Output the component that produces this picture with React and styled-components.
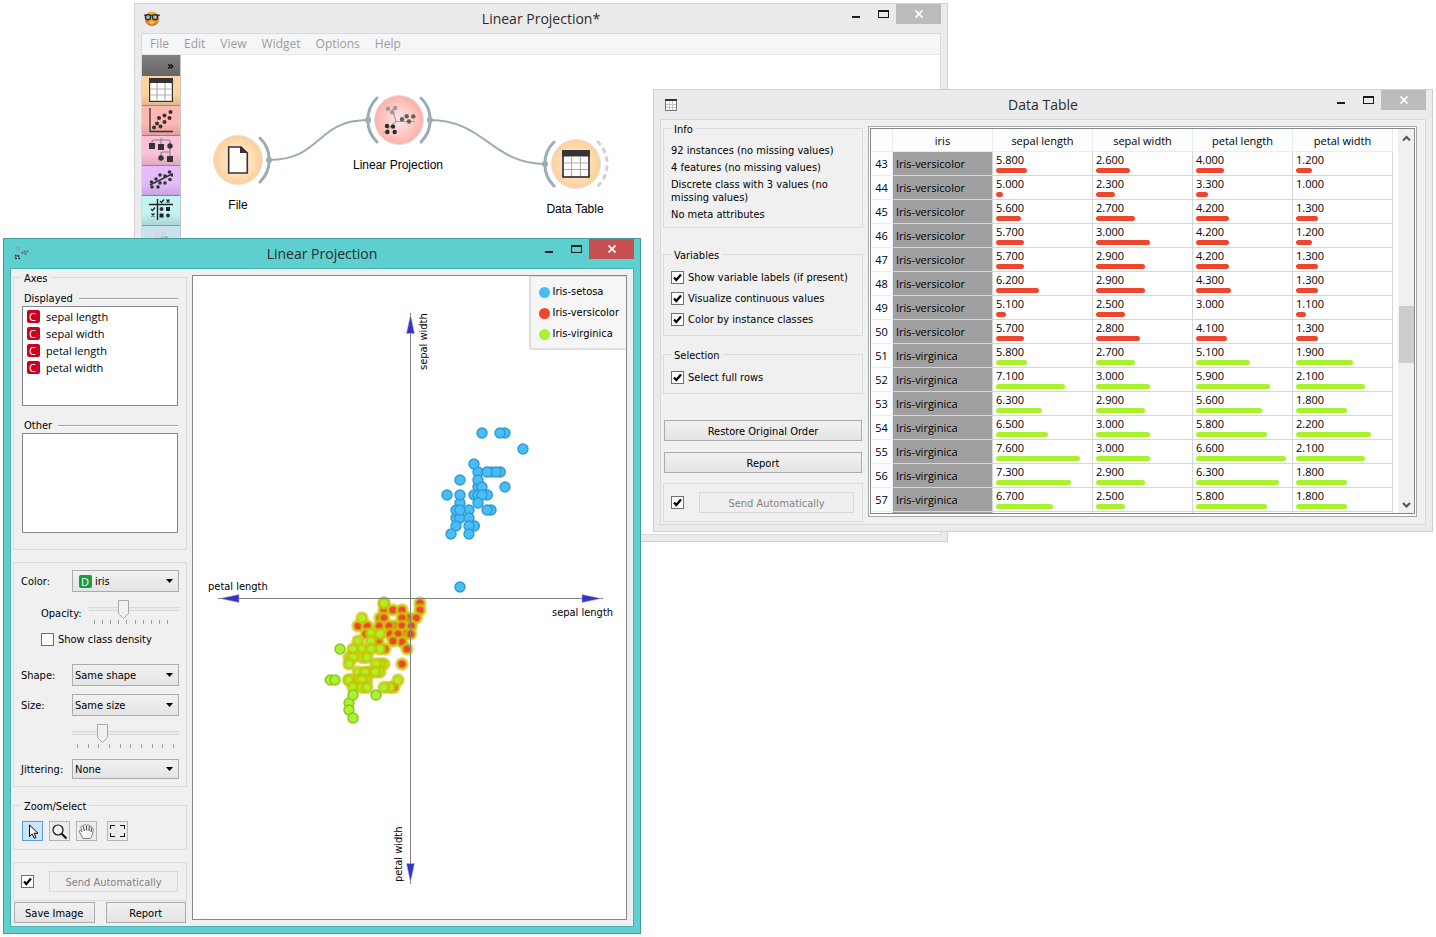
import React from "react";
import styled, { createGlobalStyle, css } from "styled-components";

const UI_FONT = '"DejaVu Sans Condensed", "DejaVu Sans", Tahoma, sans-serif';
const TEXT_FONT = '"Open Sans", "Segoe UI", sans-serif';
const NODE_FONT = '"Liberation Sans", Arial, sans-serif';

const RED = "rgb(237,70,47)";
const GREEN = "rgb(170,242,43)";
const BLUE = "rgb(70,190,250)";

const svgUrl = (body, w, h) =>
  `url("data:image/svg+xml,${encodeURIComponent(
    `<svg xmlns='http://www.w3.org/2000/svg' width='${w}' height='${h}' viewBox='0 0 ${w} ${h}'>${body}</svg>`
  )}")`;

const CHECK = svgUrl("<path d='M2 5.5L4.3 8L9 2.5' fill='none' stroke='#000' stroke-width='2.2'/>", 11, 11);
const ARROW = svgUrl("<path d='M0 0H7L3.5 4Z' fill='#000'/>", 7, 4);
const THUMB = svgUrl(
  "<path d='M.5 .5H10.5V13.5L5.5 18.5L.5 13.5Z' fill='#f0f0f0' stroke='#a8a8a8'/>",
  11,
  19
);

const GlobalStyle = createGlobalStyle`
  *, *::before, *::after { box-sizing: border-box; }
  body { margin: 0; background: #fff; color: #000; font: 11px/14px ${UI_FONT}; }
  button, select, input { font: inherit; color: inherit; margin: 0; }
`;

/* ---------- desktop and window frames ---------- */

const Desktop = styled.main`
  position: relative;
  min-height: 100vh;
  min-width: 1300px;
  overflow: hidden;
`;

const Frame = styled.section`
  position: absolute;
  top: ${(p) => p.$top}px;
  left: ${(p) => p.$left}px;
  right: ${(p) => p.$right}px;
  padding: 0 6px 6px;
  background: ${(p) => (p.$active ? "#5dcfcf" : "#ebebeb")};
  border: 1px solid ${(p) => (p.$active ? "#459b9b" : "#d0d0d0")};
`;

const TitleBar = styled.header`
  display: grid;
  grid-template-columns: 1fr auto 1fr;
  align-items: start;
  height: 29px;
`;

const TitleIcon = styled.span`
  display: flex;
  align-items: center;
  height: 29px;
  padding-left: ${(p) => p.$pad}px;
`;

const Title = styled.h1`
  margin: 0;
  font: 400 14px/30px ${TEXT_FONT};
  color: #2b2b2b;
`;

const Controls = styled.div`
  display: flex;
  justify-self: end;
`;

const ControlButton = styled.button`
  display: flex;
  align-items: center;
  justify-content: center;
  width: ${(p) => (p.$close ? 45 : 27)}px;
  height: 20px;
  padding: ${(p) => (p.$close ? "0" : "0 0 0 2px")};
  border: 0;
  background: ${(p) => (p.$close ? (p.$active ? "#c75050" : "#bcbcbc") : "transparent")};
`;

const Client = styled.div`
  border: 1px solid ${(p) => (p.$active ? "#4ab0b0" : "#dadada")};
  background: #f0f0f0;
`;

function Window({ title, icon, iconPad = 3, active, top, left, right, children }) {
  return (
    <Frame $active={active} $top={top} $left={left} $right={right} aria-label={title}>
      <TitleBar>
        <TitleIcon $pad={iconPad}>{icon}</TitleIcon>
        <Title>{title}</Title>
        <Controls>
          <ControlButton aria-label="Minimize">
            <svg width="11" height="10" viewBox="0 0 11 10" shapeRendering="crispEdges">
              <path d="M1 7H9V9H1Z" fill="#1c1c1c" />
            </svg>
          </ControlButton>
          <ControlButton aria-label="Maximize">
            <svg width="11" height="8" viewBox="0 0 11 8" shapeRendering="crispEdges">
              <path d="M0 0H11V8H0ZM1 2V7H10V2Z" fill="#1c1c1c" fillRule="evenodd" />
            </svg>
          </ControlButton>
          <ControlButton $close $active={active} aria-label="Close">
            <svg width="8" height="8" viewBox="0 0 8 8">
              <path d="M.5 .5L7.5 7.5M7.5 .5L.5 7.5" stroke="#fff" strokeWidth="1.7" />
            </svg>
          </ControlButton>
        </Controls>
      </TitleBar>
      <Client $active={active}>{children}</Client>
    </Frame>
  );
}

/* ---------- shared form parts ---------- */

const GroupBox = styled.fieldset`
  margin: ${(p) => p.$gap || 0}px 0 0;
  padding: 0;
  min-width: 0;
  border: 1px solid #dcdcdc;
`;

const GroupTitle = styled.legend`
  margin-left: 7px;
  padding: 0 3px;
  height: 14px;
  line-height: 17px;
`;

const PushButton = styled.button`
  flex: 1;
  height: 21px;
  padding: 2px 0 0;
  border: 1px solid #acacac;
  background: linear-gradient(#f1f1f1, #e4e4e4);
  &:disabled {
    color: #838383;
    border-color: #d9d9d9;
    background: #efefef;
  }
`;

const CheckInput = styled.input.attrs({ type: "checkbox" })`
  appearance: none;
  flex: none;
  width: 13px;
  height: 13px;
  border: 1px solid #707070;
  background: #fff;
  &:checked {
    background: #fff ${CHECK} center no-repeat;
  }
`;

const CheckLabel = styled.label`
  display: flex;
  align-items: center;
  gap: 4px;
  height: 17px;
`;

const CheckText = styled.span`
  padding-top: 1px;
`;

function Check({ children, ...rest }) {
  return (
    <CheckLabel>
      <CheckInput {...rest} />
      <CheckText>{children}</CheckText>
    </CheckLabel>
  );
}

const AutoRow = styled.div`
  display: flex;
  align-items: center;
  gap: 15px;
  padding: 8px 8px 8px 7px;
`;

function AutoCommit({ gap }) {
  return (
    <GroupBox $gap={gap}>
      <AutoRow>
        <CheckInput defaultChecked aria-label="Send automatically" />
        <PushButton disabled>Send Automatically</PushButton>
      </AutoRow>
    </GroupBox>
  );
}

/* ---------- icons ---------- */

const OrangeLogo = () => (
  <svg width="16" height="16" viewBox="0 0 16 16">
    <defs>
      <radialGradient id="face" cx="50%" cy="35%" r="65%">
        <stop offset="0" stopColor="#ffd34a" />
        <stop offset="0.6" stopColor="#f59a20" />
        <stop offset="1" stopColor="#d9621a" />
      </radialGradient>
    </defs>
    <circle cx="8" cy="7.8" r="7.2" fill="url(#face)" />
    <path d="M0 4.2H16" stroke="#333" strokeWidth="1.3" />
    <circle cx="4" cy="6.2" r="2.6" fill="#a9b8bd" stroke="#2a2a2a" strokeWidth="1.4" />
    <circle cx="11" cy="6.2" r="2.6" fill="#a9b8bd" stroke="#2a2a2a" strokeWidth="1.4" />
    <path d="M4.5 11.2Q8 14 11.5 10.8Q8 11.800 4.5 11.2Z" fill="#fff3c0" />
  </svg>
);

const TableGlyph = ({ size }) => (
  <svg width={size} height={size} viewBox="0 0 24 24">
    <rect x="0.6" y="0.6" width="22.8" height="22.8" fill="#fff" stroke="#333" strokeWidth="1.2" />
    <path d="M0 0H24V5H0Z" fill="#333" />
    <path d="M1 11H23M1 17H23M8 5V23M16 5V23" stroke="#b0b0b0" strokeWidth="1.2" />
  </svg>
);

const SmallTable = () => (
  <svg width="12" height="12" viewBox="0 0 12 12" shapeRendering="crispEdges">
    <path d="M0 0H12V12H0Z" fill="#777" />
    <path d="M0 0H12V2H0Z" fill="#333" />
    <path d="M1 2H11V11H1Z" fill="#fff" />
    <path d="M1 5.5H11M1 8.5H11M4.5 2V11M7.5 2V11" stroke="#c4c4c4" />
  </svg>
);

const ProjectionGlyph = ({ x = 0, y = 0, size = 34 }) => (
  <svg x={x} y={y} width={size} height={size} viewBox="0 0 34 34">
    <path d="M13 17.200L9.500 5M13 17.500H32M13 17.200L0.500 29.500" stroke="#a3a3a3" strokeWidth="1.2" fill="none" />
    <g fill="#999">
      <circle cx="5" cy="4.700" r="2.2" />
      <circle cx="12.200" cy="4" r="2.2" />
      <circle cx="9.200" cy="8.300" r="2.2" />
    </g>
    <g fill="#606060">
      <circle cx="19" cy="15.300" r="2.2" />
      <circle cx="23.700" cy="12.200" r="2.2" />
      <circle cx="30.300" cy="12.400" r="2.2" />
      <circle cx="26" cy="17.500" r="2.2" />
    </g>
    <g fill="#2a2a2a">
      <circle cx="4" cy="22" r="2.2" />
      <circle cx="10" cy="22.600" r="2.2" />
      <circle cx="4.400" cy="28" r="2.2" />
      <circle cx="11.700" cy="28" r="2.2" />
    </g>
  </svg>
);

const dots = (list, r) => list.map(([x, y], i) => <circle key={i} cx={x} cy={y} r={r} fill="#333" />);

const ScatterGlyph = () => (
  <svg width="24" height="26" viewBox="0 0 24 26">
    <path d="M1 1V24.5H24" fill="none" stroke="#333" strokeWidth="1.3" />
    {dots([[5, 20.5], [11.500, 19.5], [8, 16.5], [15.500, 15], [10, 11], [15.5, 8.5], [20.5, 11], [21.500, 5]], 2)}
  </svg>
);

const TreeGlyph = () => (
  <svg width="26" height="26" viewBox="0 0 26 26">
    <path d="M13 1V8M4 7V4Q4 3 6 3H20Q22 3 22 4V24M13 21V16Q13 15 15 15H22" fill="none" stroke="#888" strokeWidth="1.2" />
    <path d="M1 6H7V12H1ZM10 7H16V13H10ZM19 19H25V25H19Z" fill="#333" />
    {dots([[22, 9], [13, 21]], 2.7)}
  </svg>
);

const RegressionGlyph = () => (
  <svg width="24" height="22" viewBox="0 0 24 22">
    <path d="M1 16L23 5" stroke="#333" strokeWidth="1.4" />
    {dots([[3, 18], [9, 18], [2.5, 13], [7, 10], [11, 14], [16, 14], [21, 10.5], [11, 6], [16, 7], [20.5, 3], [23, 6]], 1.8)}
  </svg>
);

const EvaluateGlyph = () => (
  <svg width="24" height="24" viewBox="0 0 24 24">
    <path d="M8.5 1V22M0 6.5H24" stroke="#222" strokeWidth="1.4" />
    <path
      d="M11 3L12.5 4.5L15 1.5M2 11L3.5 12.5L6 9.5M17.5 1.500L20.5 4.5M20.5 1.5L17.5 4.5M2.5 15.5L5.5 18.5M5.5 15.5L2.5 18.5"
      fill="none"
      stroke="#222"
      strokeWidth="1.3"
    />
    <path d="M17 9H21V13H17ZM10.5 15.5H14.5V19.5H10.5Z" fill="#222" />
    {dots([[12.5, 11], [19, 17.5]], 2)}
  </svg>
);

const FadedGlyph = () => (
  <svg width="22" height="22" viewBox="0 0 22 22">
    <g fill="#d6d6d6">
      <circle cx="7" cy="6" r="3" />
      <circle cx="13" cy="5" r="2.5" />
      <circle cx="5" cy="11" r="2.5" />
    </g>
    <g fill="#a9b0b3">
      <circle cx="16" cy="9" r="2" />
      <circle cx="12" cy="10" r="2" />
    </g>
  </svg>
);

/* ---------- canvas window ---------- */

const MenuBar = styled.nav`
  display: flex;
  gap: 15px;
  height: 21px;
  padding: 0 8px;
  background: #f5f6f7;
  border-bottom: 1px solid #e8e8e8;
`;

const MenuItem = styled.a`
  font: 12px/20px ${TEXT_FONT};
  color: #9c9c9c;
  text-decoration: none;
`;

const Workbench = styled.div`
  display: flex;
  background: #fff;
`;

const ToolDock = styled.div`
  flex: none;
  width: 39px;
  border-right: 1px solid #c8c8c8;
`;

const DockHeader = styled.button`
  display: block;
  width: 100%;
  height: 21px;
  padding: 0 6px 0 0;
  border: 0;
  text-align: right;
  font: 700 12px/20px ${UI_FONT};
  background: linear-gradient(#808080, #666);
`;

const DockButton = styled.button`
  display: flex;
  align-items: center;
  justify-content: center;
  width: 100%;
  height: 30px;
  padding: 0 0 1px;
  border: 0;
  border-bottom: 1px solid rgba(0, 0, 0, 0.35);
  background: linear-gradient(transparent 60%, rgba(0, 0, 0, 0.12)) ${(p) => p.$color};
`;

const Scheme = styled.svg`
  flex: 1;
  min-width: 0;
  height: 479px;
  display: block;
  text {
    font: 12px ${NODE_FONT};
    text-anchor: middle;
  }
`;

const MENU = ["File", "Edit", "View", "Widget", "Options", "Help"];

const CATEGORIES = [
  ["Data", "#ffd39f", <TableGlyph size={24} />],
  ["Visualize", "#ffb7b1", <ScatterGlyph />],
  ["Classify", "#fac1d9", <TreeGlyph />],
  ["Regression", "#e5bbfb", <RegressionGlyph />],
  ["Evaluate", "#c3f3f3", <EvaluateGlyph />],
  ["Unsupervised", "#cae1ef", <FadedGlyph />],
];

const rightArc = (cx, cy) => `M${cx + 22} ${cy - 22}A31 31 0 0 1 ${cx + 22} ${cy + 22}`;
const leftArc = (cx, cy) => `M${cx - 22} ${cy - 22}A31 31 0 0 0 ${cx - 22} ${cy + 22}`;

function CanvasWindow() {
  return (
    <Window title="Linear Projection*" icon={<OrangeLogo />} top={3} left={134} right={488}>
      <MenuBar>
        {MENU.map((m) => (
          <MenuItem key={m} href="#">
            {m}
          </MenuItem>
        ))}
      </MenuBar>
      <Workbench>
        <ToolDock>
          <DockHeader>»</DockHeader>
          {CATEGORIES.map(([name, color, glyph]) => (
            <DockButton key={name} $color={color} aria-label={name}>
              {glyph}
            </DockButton>
          ))}
        </ToolDock>
        <Scheme viewBox="181 55 759 479" preserveAspectRatio="xMinYMin meet">
          <defs>
            <radialGradient id="orangeNode">
              <stop offset="0" stopColor="#fff4e6" />
              <stop offset="1" stopColor="#ffcf98" />
            </radialGradient>
            <radialGradient id="redNode">
              <stop offset="0" stopColor="#ffe9e7" />
              <stop offset="1" stopColor="#ffb0aa" />
            </radialGradient>
          </defs>
          <g fill="none" stroke="#9cacb4" strokeWidth="2">
            <path d="M269 160C322 160 316 120 368 120" />
            <path d="M430 120C484 120 492 164 545 164" />
          </g>
          <g fill="none" stroke="#9cacb4" strokeWidth="3" strokeLinecap="round">
            <path d={rightArc(238, 160)} />
            <path d={leftArc(399, 120)} />
            <path d={rightArc(399, 120)} />
            <path d={leftArc(576, 164)} />
            <path d={rightArc(576, 164)} stroke="#cbd3d8" strokeDasharray="3 6" />
          </g>
          <g fill="#9cacb4">
            <circle cx="269" cy="160" r="3" />
            <circle cx="368" cy="120" r="3" />
            <circle cx="430" cy="120" r="3" />
            <circle cx="545" cy="164" r="3" />
          </g>
          <g stroke="#dfe3e6" strokeWidth="1">
            <circle cx="238" cy="160" r="24.5" fill="url(#orangeNode)" />
            <circle cx="399" cy="120" r="24.5" fill="url(#redNode)" />
            <circle cx="576" cy="164" r="24.5" fill="url(#orangeNode)" />
          </g>
          <path d="M228.700 147H241L247.300 153V173H228.700Z" fill="#fff" stroke="#333" strokeWidth="1.6" />
          <path d="M240 146.500V153H247.800Z" fill="#333" />
          <ProjectionGlyph x={383} y={104} />
          <svg x="562" y="150" width="28" height="28" viewBox="0 0 28 28">
            <rect x="1" y="1" width="26" height="26" fill="#fff" stroke="#333" strokeWidth="1.7" />
            <path d="M0.200 0.200H27.800V6.500H0.200Z" fill="#333" />
            <path d="M2 13H26M2 19.500H26M9.500 6V26M18.500 6V26" stroke="#b4aba4" strokeWidth="1.2" />
          </svg>
          <text x="238" y="209">File</text>
          <text x="398" y="169">Linear Projection</text>
          <text x="575" y="213">Data Table</text>
        </Scheme>
      </Workbench>
    </Window>
  );
}

/* ---------- data table window ---------- */

const DataLayout = styled.div`
  display: flex;
  gap: 5px;
  align-items: flex-start;
  padding: 1px 8px 2px 2px;
`;

const DataSide = styled.div`
  flex: none;
  width: 200px;
`;

const InfoBody = styled.div`
  display: flex;
  flex-direction: column;
  gap: 4px;
  padding: 9px 7px 6px;
  p {
    margin: 0;
    line-height: 13px;
  }
`;

const CheckBody = styled.div`
  display: flex;
  flex-direction: column;
  gap: 4px;
  padding: 8px 7px 7px;
`;

const ButtonStack = styled.div`
  display: grid;
  gap: 11px;
  margin-top: 26px;
  padding: 0 1px;
`;

const TableFrame = styled.div`
  flex: 1;
  min-width: 0;
  margin-top: 5px;
  padding: 1px 1px 2px;
  border: 1px solid #a9a9a9;
  background: #fff;
`;

const TableView = styled.div`
  display: flex;
  justify-content: space-between;
  border: 1px solid #828790;
`;

const Grid = styled.table`
  flex: none;
  width: 522px;
  table-layout: fixed;
  border-collapse: separate;
  border-spacing: 0;
  font: 11px/16px ${TEXT_FONT};
`;

const headerCell = css`
  font-weight: 400;
  background: #fdfdfd;
  border-right: 1px solid #e4eefb;
  border-bottom: 1px solid #e4eefb;
`;

const HeadCell = styled.th`
  ${headerCell}
  width: ${(p) => p.$w}px;
  height: 23px;
  padding: 2px 0 0;
`;

const RowHead = styled.th`
  ${headerCell}
  height: 24px;
  padding: 0;
`;

const bodyCell = css`
  height: 24px;
  padding: 0 3px;
  border-right: 1px solid #d6d6d6;
  border-bottom: 1px solid #d6d6d6;
`;

const ClassCell = styled.td`
  ${bodyCell}
  background: #a0a0a0;
`;

const ValueCell = styled.td`
  ${bodyCell}
  vertical-align: top;
`;

const Bar = styled.div`
  height: 5px;
  border-radius: 3px;
  background: ${(p) => p.$color};
`;

const CutCell = styled.td`
  height: 1px;
  padding: 0;
  background: ${(p) => (p.$grey ? "#a0a0a0" : "#fff")};
  border-right: 1px solid #d6d6d6;
`;

const ScrollBar = styled.div`
  display: flex;
  flex-direction: column;
  align-items: center;
  width: 16px;
  padding: 6px 0 4px;
  background: #f0f0f0;
`;

const ScrollThumb = styled.div`
  width: 15px;
  height: 57px;
  margin: 164px 0 auto;
  background: #cdcdcd;
`;

const COLUMNS = [
  { name: "sepal length", min: 4.9, scale: 29.4 },
  { name: "sepal width", min: 2, scale: 49 },
  { name: "petal length", min: 3, scale: 23.8 },
  { name: "petal width", min: 1, scale: 58.7 },
];

const ROWS = [
  [43, 5.8, 2.6, 4.0, 1.2],
  [44, 5.0, 2.3, 3.3, 1.0],
  [45, 5.6, 2.7, 4.2, 1.3],
  [46, 5.7, 3.0, 4.2, 1.2],
  [47, 5.7, 2.9, 4.2, 1.3],
  [48, 6.2, 2.9, 4.3, 1.3],
  [49, 5.1, 2.5, 3.0, 1.1],
  [50, 5.7, 2.8, 4.1, 1.3],
  [51, 5.8, 2.7, 5.1, 1.9],
  [52, 7.1, 3.0, 5.9, 2.1],
  [53, 6.3, 2.9, 5.6, 1.8],
  [54, 6.5, 3.0, 5.8, 2.2],
  [55, 7.6, 3.0, 6.6, 2.1],
  [56, 7.3, 2.9, 6.3, 1.8],
  [57, 6.7, 2.5, 5.8, 1.8],
];

const barWidth = (v, { min, scale }) => (v > min ? Math.floor(5 + (v - min) * scale) : 0);

const Chevron = ({ down }) => (
  <svg width="9" height="7" viewBox="0 0 9 7">
    <path d={down ? "M1 1L4.5 4.5L8 1" : "M1 5.5L4.5 2L8 5.5"} fill="none" stroke="#555" strokeWidth="2" />
  </svg>
);

function DataTableWindow() {
  return (
    <Window title="Data Table" icon={<SmallTable />} iconPad={5} top={89} left={653} right={3}>
      <DataLayout>
        <DataSide>
          <GroupBox>
            <GroupTitle>Info</GroupTitle>
            <InfoBody>
              <p>92 instances (no missing values)</p>
              <p>4 features (no missing values)</p>
              <p>Discrete class with 3 values (no missing values)</p>
              <p>No meta attributes</p>
            </InfoBody>
          </GroupBox>
          <GroupBox $gap={19}>
            <GroupTitle>Variables</GroupTitle>
            <CheckBody>
              <Check defaultChecked>Show variable labels (if present)</Check>
              <Check defaultChecked>Visualize continuous values</Check>
              <Check defaultChecked>Color by instance classes</Check>
            </CheckBody>
          </GroupBox>
          <GroupBox $gap={11}>
            <GroupTitle>Selection</GroupTitle>
            <CheckBody>
              <Check defaultChecked>Select full rows</Check>
            </CheckBody>
          </GroupBox>
          <ButtonStack>
            <PushButton>Restore Original Order</PushButton>
            <PushButton>Report</PushButton>
          </ButtonStack>
          <AutoCommit gap={10} />
        </DataSide>
        <TableFrame>
          <TableView>
            <Grid>
              <thead>
                <tr>
                  <HeadCell $w={22} aria-label="Row" />
                  <HeadCell $w={100}>iris</HeadCell>
                  {COLUMNS.map((c) => (
                    <HeadCell key={c.name} $w={100}>
                      {c.name}
                    </HeadCell>
                  ))}
                </tr>
              </thead>
              <tbody>
                {ROWS.map(([n, ...values]) => (
                  <tr key={n}>
                    <RowHead scope="row">{n}</RowHead>
                    <ClassCell>{n <= 50 ? "Iris-versicolor" : "Iris-virginica"}</ClassCell>
                    {values.map((v, i) => (
                      <ValueCell key={i}>
                        {v.toFixed(3)}
                        <Bar $color={n <= 50 ? RED : GREEN} style={{ width: barWidth(v, COLUMNS[i]) }} />
                      </ValueCell>
                    ))}
                  </tr>
                ))}
                <tr aria-hidden="true">
                  <CutCell />
                  <CutCell $grey />
                  <CutCell />
                  <CutCell />
                  <CutCell />
                  <CutCell />
                </tr>
              </tbody>
            </Grid>
            <ScrollBar>
              <Chevron />
              <ScrollThumb />
              <Chevron down />
            </ScrollBar>
          </TableView>
        </TableFrame>
      </DataLayout>
    </Window>
  );
}

/* ---------- projection window ---------- */

const ProjectionLayout = styled.div`
  display: flex;
  gap: 5px;
  padding: 0 6px 0 2px;
`;

const ProjectionSide = styled.div`
  flex: none;
  width: 174px;
  padding: 1px 0 3px;
`;

const AxesBody = styled.div`
  display: grid;
  gap: 13px;
  padding: 8px 8px 16px;
`;

const ListTitle = styled.h2`
  display: flex;
  align-items: center;
  gap: 6px;
  height: 14px;
  margin: 0;
  padding-left: 2px;
  font: inherit;
  line-height: 16px;
  &::after {
    content: "";
    flex: 1;
    height: 2px;
    background: linear-gradient(#a0a0a0 50%, #fff 50%);
  }
`;

const ListBox = styled.ul`
  height: 100px;
  margin: 0;
  padding: 1px 4px;
  border: 1px solid #828790;
  background: #fff;
  list-style: none;
`;

const ListItem = styled.li`
  display: flex;
  align-items: center;
  gap: 6px;
  height: 17px;
  font: 11px/17px ${TEXT_FONT};
`;

const Badge = styled.span`
  flex: none;
  width: 13px;
  height: 13px;
  padding-left: 2px;
  border-radius: 2px;
  font: 11px/13px ${TEXT_FONT};
  color: #fff;
  background: ${(p) => p.$color};
`;

const FormBody = styled.div`
  padding: 7px;
`;

const FormRow = styled.div`
  display: flex;
  align-items: center;
  margin-top: ${(p) => p.$gap || 0}px;
  padding-left: ${(p) => p.$indent || 0}px;
`;

const FieldLabel = styled.label`
  flex: none;
  width: ${(p) => p.$w}px;
  padding-top: 2px;
`;

const SelectBox = styled.span`
  position: relative;
  flex: 1;
  min-width: 0;
  display: flex;
  ${Badge} {
    position: absolute;
    top: 5px;
    left: 7px;
    pointer-events: none;
  }
`;

const Select = styled.select`
  appearance: none;
  width: 100%;
  height: ${(p) => (p.$compact ? 20 : 22)}px;
  padding: 1px 16px 0 ${(p) => (p.$icon ? 22 : 2)}px;
  border: 1px solid #acacac;
  border-radius: 0;
  background: ${ARROW} right 5px center no-repeat, linear-gradient(#f1f1f1, #e4e4e4);
`;

const SliderBox = styled.div`
  flex: 1;
  min-width: 0;
  height: 26px;
`;

const Range = styled.input.attrs({ type: "range" })`
  appearance: none;
  display: block;
  width: 100%;
  height: 19px;
  background: linear-gradient(#e8ebea, #e8ebea) 0 8px / 100% 2px no-repeat,
    linear-gradient(#d5dad9, #d5dad9) 0 7px / 100% 4px no-repeat;
  &::-webkit-slider-thumb {
    appearance: none;
    width: 11px;
    height: 19px;
    background: ${THUMB} no-repeat;
  }
`;

const Ticks = styled.div`
  display: flex;
  justify-content: space-between;
  margin-top: 1px;
  padding: 0 ${(p) => p.$end}px 0 5px;
  i {
    width: 1px;
    height: 4px;
    background: #a5a299;
  }
`;

const ToolRow = styled.div`
  display: flex;
  gap: 6px;
  padding: 9px 8px 8px;
`;

const ToolButton = styled.button`
  display: flex;
  align-items: center;
  justify-content: center;
  width: 21px;
  height: 20px;
  padding: 0;
  border: 1px solid ${(p) => (p.$on ? "#569de5" : "#b4b4b4")};
  background: ${(p) => (p.$on ? "#cce4fc" : "#ececec")};
  &:last-child {
    margin-left: 4px;
  }
`;

const BottomButtons = styled.div`
  display: flex;
  gap: 11px;
  margin-top: 1px;
  padding: 0 1px;
`;

const PlotView = styled.div`
  position: relative;
  flex: 1;
  min-width: 0;
  margin: 6px 0;
  border: 1px solid #828790;
  background: #fff;
`;

const Plot = styled.svg`
  display: block;
  width: 100%;
  height: 100%;
  text {
    font: 11px ${UI_FONT};
  }
`;

const Legend = styled.ul`
  position: absolute;
  top: 0;
  right: 0;
  display: grid;
  gap: 7px;
  margin: 0;
  padding: 8px 7px 7px 8px;
  border: 1px solid #dfdfdf;
  border-width: 1px 0 2px 2px;
  border-radius: 0 0 0 3px;
  background: #f6f6f6;
  list-style: none;
`;

const LegendItem = styled.li`
  display: flex;
  align-items: center;
  gap: 3px;
  height: 14px;
  line-height: 16px;
  &::before {
    content: "";
    width: 11px;
    height: 11px;
    border-radius: 50%;
    background: ${(p) => p.$color};
  }
`;

/* Point positions are stored in thirds of a pixel, relative to each cloud's origin. */
const SETOSA = [
  [246, 69], [315, 69], [300, 69], [369, 117], [234, 186], [222, 162], [301, 186], [274, 186], [288, 186], [261, 186],
  [180, 210], [234, 231], [234, 210], [246, 231], [315, 231], [141, 255], [180, 279], [180, 255], [222, 255],
  [262, 255], [234, 255], [246, 255], [234, 279], [168, 324], [180, 324], [168, 300], [207, 300], [180, 300], [273, 300],
  [261, 300], [207, 324], [168, 348], [223, 348], [207, 348], [153, 372], [207, 372], [180, 531],
].map(([x, y]) => [400 + x / 3, 410 + y / 3]);

const lower = (list) => list.map(([x, y]) => [190 + x / 3, 570 + y / 3]);

const VERSICOLOR = lower([
  [690, 99], [690, 120], [582, 120], [609, 120], [636, 120], [570, 144], [582, 144], [655, 144], [636, 144],
  [679, 144], [504, 168], [532, 168], [568, 168], [612, 168], [636, 168], [664, 168], [597, 168], [528, 192],
  [600, 192], [645, 192], [624, 192], [662, 192], [565, 213], [636, 216], [609, 213], [651, 237], [585, 237],
  [636, 282], [612, 352],
]);

const VIRGINICA = lower([
  [582, 99], [582, 99], [516, 144], [543, 190], [570, 192], [504, 213], [543, 213], [516, 237], [489, 237],
  [570, 237], [543, 237], [477, 262], [516, 262], [489, 262], [531, 262], [477, 282], [582, 282], [570, 282],
  [558, 282], [504, 306], [540, 306], [525, 306], [570, 306], [556, 306], [504, 330], [530, 330], [477, 330],
  [477, 330], [516, 330], [624, 330], [489, 352], [516, 352], [531, 352], [600, 352], [582, 352],
]);

const UNSELECTED = lower([
  [450, 237], [421, 330], [435, 330], [558, 375], [477, 399], [489, 375], [477, 420], [489, 444],
]);

const SelectedPoints = ({ points, color }) =>
  points.map(([x, y], i) => (
    <g key={i}>
      <circle cx={x} cy={y} r="6.8" fill="rgba(200,200,0,0.6)" />
      <circle cx={x} cy={y} r="4.3" fill={color} stroke="rgba(205,190,0,0.6)" strokeWidth="2.4" />
    </g>
  ));

function PlotArea() {
  return (
    <PlotView>
      <Plot viewBox="193 276 433 643">
        <g fill={BLUE} stroke="#3399cf" strokeWidth="1.4">
          {SETOSA.map(([x, y], i) => (
            <circle key={i} cx={x} cy={y} r="5" />
          ))}
        </g>
        <SelectedPoints points={VERSICOLOR} color={RED} />
        <SelectedPoints points={VIRGINICA} color={GREEN} />
        <g fill={GREEN} stroke="#85c427" strokeWidth="1.4">
          {UNSELECTED.map(([x, y], i) => (
            <circle key={i} cx={x} cy={y} r="5" />
          ))}
        </g>
        <path d="M410.5 313V884M218 598.5H603" stroke="#808080" />
        <g fill="#3232cd" stroke="#b0b0c8" strokeWidth="0.5">
          <path d="M410.5 315L414.5 333.5H406.5Z" />
          <path d="M410.5 882L414.5 863.5H406.5Z" />
          <path d="M601 598.5L582 594.5V602.5Z" />
          <path d="M220 598.5L239 594.5V602.5Z" />
        </g>
        <text x="208" y="590">petal length</text>
        <text x="552" y="616">sepal length</text>
        <text transform="translate(427 370) rotate(-90)">sepal width</text>
        <text transform="translate(402 882) rotate(-90)">petal width</text>
      </Plot>
      <Legend>
        <LegendItem $color={BLUE}>Iris-setosa</LegendItem>
        <LegendItem $color={RED}>Iris-versicolor</LegendItem>
        <LegendItem $color={GREEN}>Iris-virginica</LegendItem>
      </Legend>
    </PlotView>
  );
}

function Slider({ id, label, value, tickEnd = 5 }) {
  return (
    <SliderBox>
      <Range id={id} aria-label={label} defaultValue={value} />
      <Ticks $end={tickEnd}>
        {Array.from({ length: 10 }, (_, i) => (
          <i key={i} />
        ))}
      </Ticks>
    </SliderBox>
  );
}

function SelectRow({ id, label, value, gap, compact, badge }) {
  return (
    <FormRow $gap={gap}>
      <FieldLabel $w={51} htmlFor={id}>
        {label}
      </FieldLabel>
      <SelectBox>
        <Select id={id} $compact={compact} $icon={badge}>
          <option>{value}</option>
        </Select>
        {badge && <Badge $color="#1c9a3e">{badge}</Badge>}
      </SelectBox>
    </FormRow>
  );
}

function ProjectionWindow() {
  return (
    <Window
      active
      title="Linear Projection"
      icon={<ProjectionGlyph size={15} />}
      iconPad={4}
      top={238}
      left={3}
      right={795}
    >
      <ProjectionLayout>
        <ProjectionSide>
          <GroupBox>
            <GroupTitle>Axes</GroupTitle>
            <AxesBody>
              <div>
                <ListTitle>Displayed</ListTitle>
                <ListBox>
                  {COLUMNS.map((c) => (
                    <ListItem key={c.name}>
                      <Badge $color="#cc0022">C</Badge>
                      {c.name}
                    </ListItem>
                  ))}
                </ListBox>
              </div>
              <div>
                <ListTitle>Other</ListTitle>
                <ListBox />
              </div>
            </AxesBody>
          </GroupBox>
          <GroupBox $gap={12}>
            <FormBody>
              <SelectRow id="color" label="Color:" value="iris" badge="D" />
              <FormRow $gap={8} $indent={20}>
                <FieldLabel $w={48} htmlFor="opacity">
                  Opacity:
                </FieldLabel>
                <Slider id="opacity" value={37} tickEnd={11} />
              </FormRow>
              <FormRow $gap={5} $indent={20}>
                <Check>Show class density</Check>
              </FormRow>
              <SelectRow id="shape" label="Shape:" value="Same shape" gap={16} />
              <SelectRow id="size" label="Size:" value="Same size" gap={8} />
              <FormRow $gap={8} $indent={51}>
                <Slider label="Symbol size" value={26} />
              </FormRow>
              <SelectRow id="jitter" label="Jittering:" value="None" gap={9} compact />
            </FormBody>
          </GroupBox>
          <GroupBox $gap={11}>
            <GroupTitle>Zoom/Select</GroupTitle>
            <ToolRow>
              <ToolButton $on aria-label="Select">
                <svg width="13" height="16" viewBox="0 0 13 16">
                  <path
                    d="M3.5 2V13.5L6.200 11L8.300 15.300L10 14.500L8.200 10.300H12Z"
                    fill="#fff"
                    stroke="#000"
                    strokeWidth="1"
                  />
                </svg>
              </ToolButton>
              <ToolButton aria-label="Zoom">
                <svg width="17" height="17" viewBox="0 0 17 17">
                  <circle cx="7" cy="7" r="5" fill="#f4f4f4" stroke="#111" strokeWidth="1.2" />
                  <path d="M10.700 10.700L15.500 15.500" stroke="#111" strokeWidth="2" />
                </svg>
              </ToolButton>
              <ToolButton aria-label="Pan">
                <svg width="17" height="17" viewBox="0 0 17 17">
                  <path
                    d="M5 15.500L2 10Q0.500 7.500 1.800 7.200Q3 7 4 9L3 4.500Q2.900 2.800 4 2.800Q5 2.800 5.500 4.500L5.800 2.500Q6.300 1.300 7.300 1.600Q8.200 1.800 8.400 3Q9 1.600 10 1.700Q11.300 1.900 11.300 3.600Q12 2.700 13 3.200Q13.800 3.700 13.700 5.300Q15.200 4.900 15.300 6.500Q15.500 11 12.500 15.500Z"
                    fill="#fafafa"
                    stroke="#808080"
                  />
                  <path
                    d="M5.500 4.500L6.500 8M8.400 3L8.800 7.500M11.300 3.600L11 8M13.700 5.300L13 9"
                    fill="none"
                    stroke="#333"
                    strokeWidth="1"
                  />
                </svg>
              </ToolButton>
              <ToolButton aria-label="Reset view">
                <svg width="15" height="12" viewBox="0 0 15 12" shapeRendering="crispEdges">
                  <path d="M.5 4V.5H5M10 .5H14.500V4M14.500 8V11.500H10M5 11.500H.5V8" fill="none" stroke="#111" />
                </svg>
              </ToolButton>
            </ToolRow>
          </GroupBox>
          <AutoCommit gap={12} />
          <BottomButtons>
            <PushButton>Save Image</PushButton>
            <PushButton>Report</PushButton>
          </BottomButtons>
        </ProjectionSide>
        <PlotArea />
      </ProjectionLayout>
    </Window>
  );
}

export default function App() {
  return (
    <>
      <GlobalStyle />
      <Desktop>
        <CanvasWindow />
        <DataTableWindow />
        <ProjectionWindow />
      </Desktop>
    </>
  );
}
